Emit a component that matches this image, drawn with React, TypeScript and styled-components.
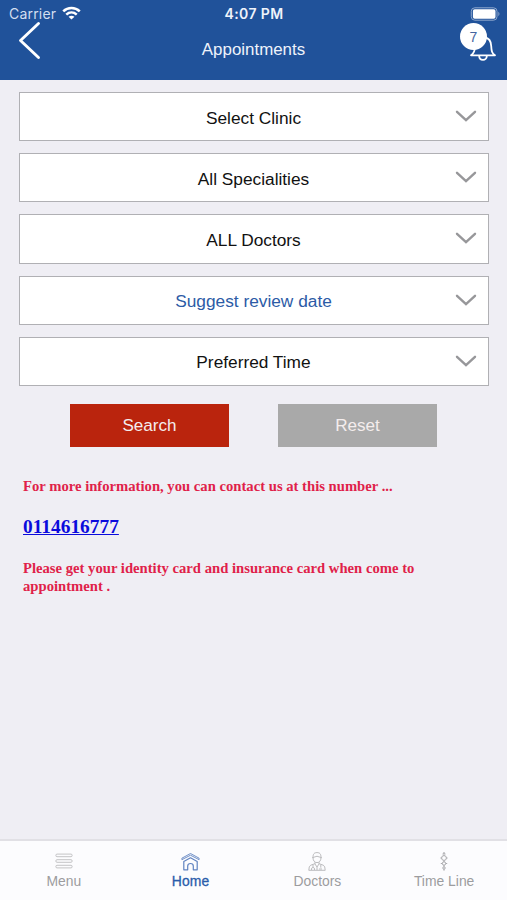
import React from "react";
import styled, { createGlobalStyle } from "styled-components";

const GlobalStyle = createGlobalStyle`
  * { box-sizing: border-box; }
  body { margin: 0; background: #efeef4; font-family: "Liberation Sans", Arial, sans-serif; }
`;

const Screen = styled.div`
  height: 900px;
  width: 507px;
  display: flex;
  flex-direction: column;
  background: #efeef4;
  overflow: hidden;
`;

const Header = styled.header`
  height: 80px;
  flex: none;
  background: #20529a;
  color: #eef3fb;
`;

const StatusBar = styled.div`
  height: 27px;
  display: grid;
  grid-template-columns: 1fr auto 1fr;
  align-items: center;
  padding: 0 6px 0 9px;
  font-family: Inter, sans-serif;
`;

const Carrier = styled.div`
  display: flex;
  align-items: center;
  gap: 6px;
  font-size: 14px;
  letter-spacing: 0.2px;
  color: #d3dff0;
`;

const Clock = styled.div`
  margin-left: -2px;
  font-size: 14px;
  font-weight: 600;
  letter-spacing: 0.4px;
`;

const BatterySlot = styled.div`
  display: flex;
  justify-content: flex-end;
`;

const NavBar = styled.div`
  height: 53px;
  display: grid;
  grid-template-columns: 48px 1fr 48px;
`;

const BackButton = styled.button`
  border: 0;
  padding: 0;
  margin: -7px 0 0 17px;
  width: 28px;
  height: 42px;
  background: none;
`;

const Title = styled.h1`
  margin: 0;
  font-size: 16.9px;
  font-weight: 400;
  line-height: 45px;
  text-align: center;
`;

const Alerts = styled.div`
  position: relative;
  height: 42px;
  svg { display: block; margin: 8px 0 0 10px; }
`;

const Badge = styled.span`
  position: absolute;
  left: 1px;
  top: -4px;
  width: 27px;
  height: 27px;
  border-radius: 50%;
  background: #fff;
  color: #45649f;
  font-size: 14px;
  line-height: 28px;
  text-align: center;
`;

const Form = styled.main`
  padding: 12px 18px 0 19px;
  flex: 1;
`;

const Fields = styled.div`
  display: flex;
  flex-direction: column;
  gap: 12px;
`;

const Field = styled.button<{ $accent?: boolean }>`
  height: 49.2px;
  padding: 0 11.5px 0 32.5px;
  border: 1.5px solid #b0b0b4;
  background: #fff;
  display: grid;
  grid-template-columns: 1fr 22px;
  align-items: center;
  font: 17.3px "Liberation Sans", Arial, sans-serif;
  color: ${(p) => (p.$accent ? "#2c5ba6" : "#111")};
  svg { display: block; margin-top: 1px; }
`;

const FieldText = styled.span`
  padding-top: 3px;
`;

const Actions = styled.div`
  display: flex;
  gap: 49px;
  margin: 18px 0 0 51px;
`;

const Action = styled.button<{ $tone: string }>`
  width: 159px;
  height: 43px;
  border: 0;
  padding: 2px 0 0;
  background: ${(p) => p.$tone};
  color: #f4eded;
  font: 17.1px "Liberation Sans", Arial, sans-serif;
`;

const Info = styled.section`
  margin: 30px 40px 0 4px;
  font-family: "Liberation Serif", "Times New Roman", serif;
  font-weight: 700;
  color: #e01f4a;
`;

const Note = styled.p`
  margin: 0;
  font-size: 14.66px;
  line-height: 18px;
`;

const Phone = styled.a`
  display: block;
  width: max-content;
  margin: 20px 0;
  font-size: 19.4px;
  line-height: 24px;
  color: #0b0bdc;
`;

const TabBar = styled.nav`
  height: 61px;
  flex: none;
  border-top: 2px solid #e1e0e5;
  background: #fcfcfe;
  display: grid;
  grid-template-columns: repeat(4, 1fr);
`;

const Tab = styled.a<{ $active?: boolean }>`
  display: flex;
  flex-direction: column;
  align-items: center;
  padding: 11px 0 0 1px;
  color: ${(p) => (p.$active ? "#2a5cab" : "#9c9c9f")};
  -webkit-text-stroke: ${(p) => (p.$active ? "0.3px" : "0")};
  font-size: 13.9px;
  letter-spacing: ${(p) => (p.$active ? "0.2px" : "0")};
  line-height: 17px;
  svg { display: block; margin-bottom: 2px; }
`;

const Chevron = () => (
  <svg width="22" height="14" viewBox="0 0 22 14" fill="none" stroke="#97979a" strokeWidth="2.4" strokeLinecap="round">
    <path d="M2 1.8 11 10.2 20 1.8" />
  </svg>
);

const WifiIcon = () => (
  <svg width="19" height="14.5" viewBox="0 0 20 15" fill="none" stroke="#fff" strokeWidth="2.7">
    <path d="M1.3 5.5C6.2.8 13.8.8 18.7 5.5M4.5 8.9C7.7 6 12.3 6 15.5 8.9" />
    <path d="M6.9 11.2Q10 8.8 13.1 11.2L10 14.2Z" fill="#fff" stroke="none" />
  </svg>
);

const BatteryIcon = () => (
  <svg width="31" height="14" viewBox="0 0 31 14">
    <rect x="1.3" y=".8" width="25.7" height="12.4" rx="3.5" fill="none" stroke="#8fa8cd" />
    <rect x="2.9" y="2.3" width="22.6" height="9.4" rx="1.8" fill="#fff" />
    <path d="M28.4 4.8Q30.5 7 28.4 9.2Z" fill="#8fa8cd" />
  </svg>
);

const BellIcon = () => (
  <svg width="28" height="28" viewBox="0 0 28 28" fill="none" stroke="#fff" strokeWidth="1.8" strokeLinejoin="round" strokeLinecap="round">
    <path d="M2 20.3H26C22.8 18.3 22.5 16 22.2 11C22 6 19.5 3 15.8 2.5C14.6 1 12.8 1.3 12.4 2.5C8 3.5 6.4 6 6.2 11C6 16 5.2 18.3 2 20.3Z" />
    <path d="M10.2 21C10.2 26.2 17.8 26.2 17.8 21" />
  </svg>
);

const MenuIcon = () => (
  <svg width="18" height="19" viewBox="0 0 18 19" fill="none" stroke="#bdbdc0" strokeWidth=".9">
    <rect x=".9" y="2.1" width="16.2" height="2.6" rx="1.1" />
    <rect x=".9" y="7.7" width="16.2" height="2.6" rx="1.1" />
    <rect x=".9" y="13.3" width="16.2" height="2.6" rx="1.1" />
  </svg>
);

const HomeIcon = () => (
  <svg width="19" height="19" viewBox="0 0 19 19" fill="none" stroke="#6083c1" strokeWidth="1.2" strokeLinejoin="round">
    <path d="M.9 7.7V6.2L9.5 1.5 18.1 6.2V7.7L9.5 3.2Z" strokeWidth=".9" />
    <path d="M2.8 9.6 9.5 5.8 16.2 9.6V17.8H12.3V14Q12.3 11.5 9.5 11.5T6.7 14V17.8H2.8Z" />
  </svg>
);

const DoctorIcon = () => (
  <svg width="18" height="19" viewBox="0 0 18 19" fill="none" stroke="#b4b4b7" strokeWidth=".9">
    <path d="M5 5.6C5 1.7 6.3.6 9 .6S13 1.7 13 5.6C13 8.8 11.3 10.6 9 10.6S5 8.8 5 5.6ZM4.2 5.7Q9 2.8 13.8 5.7M7 10.2V12L9 15 11 12V10.2" />
    <path d="M7 11.7 2.7 13.2Q.8 14 .8 18.3H17.2Q17.2 14 15.3 13.2L11 11.7M5 12.8V15.5M3.5 18V16.3Q5 14.5 6.5 16.3V18M12.8 12.8V15.7M9 15V18M11 17H14" />
  </svg>
);

const TimelineIcon = () => (
  <svg width="10" height="19" viewBox="0 0 10 19" fill="none" stroke="#a9a9ac" strokeWidth="1">
    <path d="M5 .4V3.5M5 8.5V10M5 13V14.8M5 17V18.7" />
    <path d="M3.5 2 5 .7 6.5 2" />
    <circle cx="5" cy="6" r="2.4" />
    <circle cx="5" cy="11.5" r="1.7" />
    <circle cx="5" cy="16" r="1.2" />
    <path d="M1.4 6H2.6M7.4 6H8.6M1.8 11.5H3.3M6.7 11.5H8.2" />
  </svg>
);

const fields = [
  { label: "Select Clinic" },
  { label: "All Specialities" },
  { label: "ALL Doctors" },
  { label: "Suggest review date", accent: true },
  { label: "Preferred Time" },
];

const tabs = [
  { label: "Menu", Icon: MenuIcon },
  { label: "Home", Icon: HomeIcon, active: true },
  { label: "Doctors", Icon: DoctorIcon },
  { label: "Time Line", Icon: TimelineIcon },
];

export default function App() {
  return (
    <>
      <GlobalStyle />
      <Screen>
        <Header>
          <StatusBar>
            <Carrier>Carrier <WifiIcon /></Carrier>
            <Clock>4:07 PM</Clock>
            <BatterySlot><BatteryIcon /></BatterySlot>
          </StatusBar>
          <NavBar>
            <BackButton aria-label="Back">
              <svg width="28" height="42" viewBox="0 0 28 42" fill="none" stroke="#fff" strokeWidth="2.9" strokeLinecap="round" strokeLinejoin="round">
                <path d="M21.5 3.5 3.5 20.5 21.5 37.5" />
              </svg>
            </BackButton>
            <Title>Appointments</Title>
            <Alerts><BellIcon /><Badge>7</Badge></Alerts>
          </NavBar>
        </Header>
        <Form>
          <Fields>
            {fields.map((f) => (
              <Field key={f.label} $accent={f.accent}>
                <FieldText>{f.label}</FieldText>
                <Chevron />
              </Field>
            ))}
          </Fields>
          <Actions>
            <Action $tone="#ba240d">Search</Action>
            <Action $tone="#a9a9a9">Reset</Action>
          </Actions>
          <Info>
            <Note>For more information, you can contact us at this number ...</Note>
            <Phone href="tel:0114616777">0114616777</Phone>
            <Note>Please get your identity card and insurance card when come to appointment .</Note>
          </Info>
        </Form>
        <TabBar>
          {tabs.map(({ label, Icon, active }) => (
            <Tab key={label} $active={active}><Icon />{label}</Tab>
          ))}
        </TabBar>
      </Screen>
    </>
  );
}
